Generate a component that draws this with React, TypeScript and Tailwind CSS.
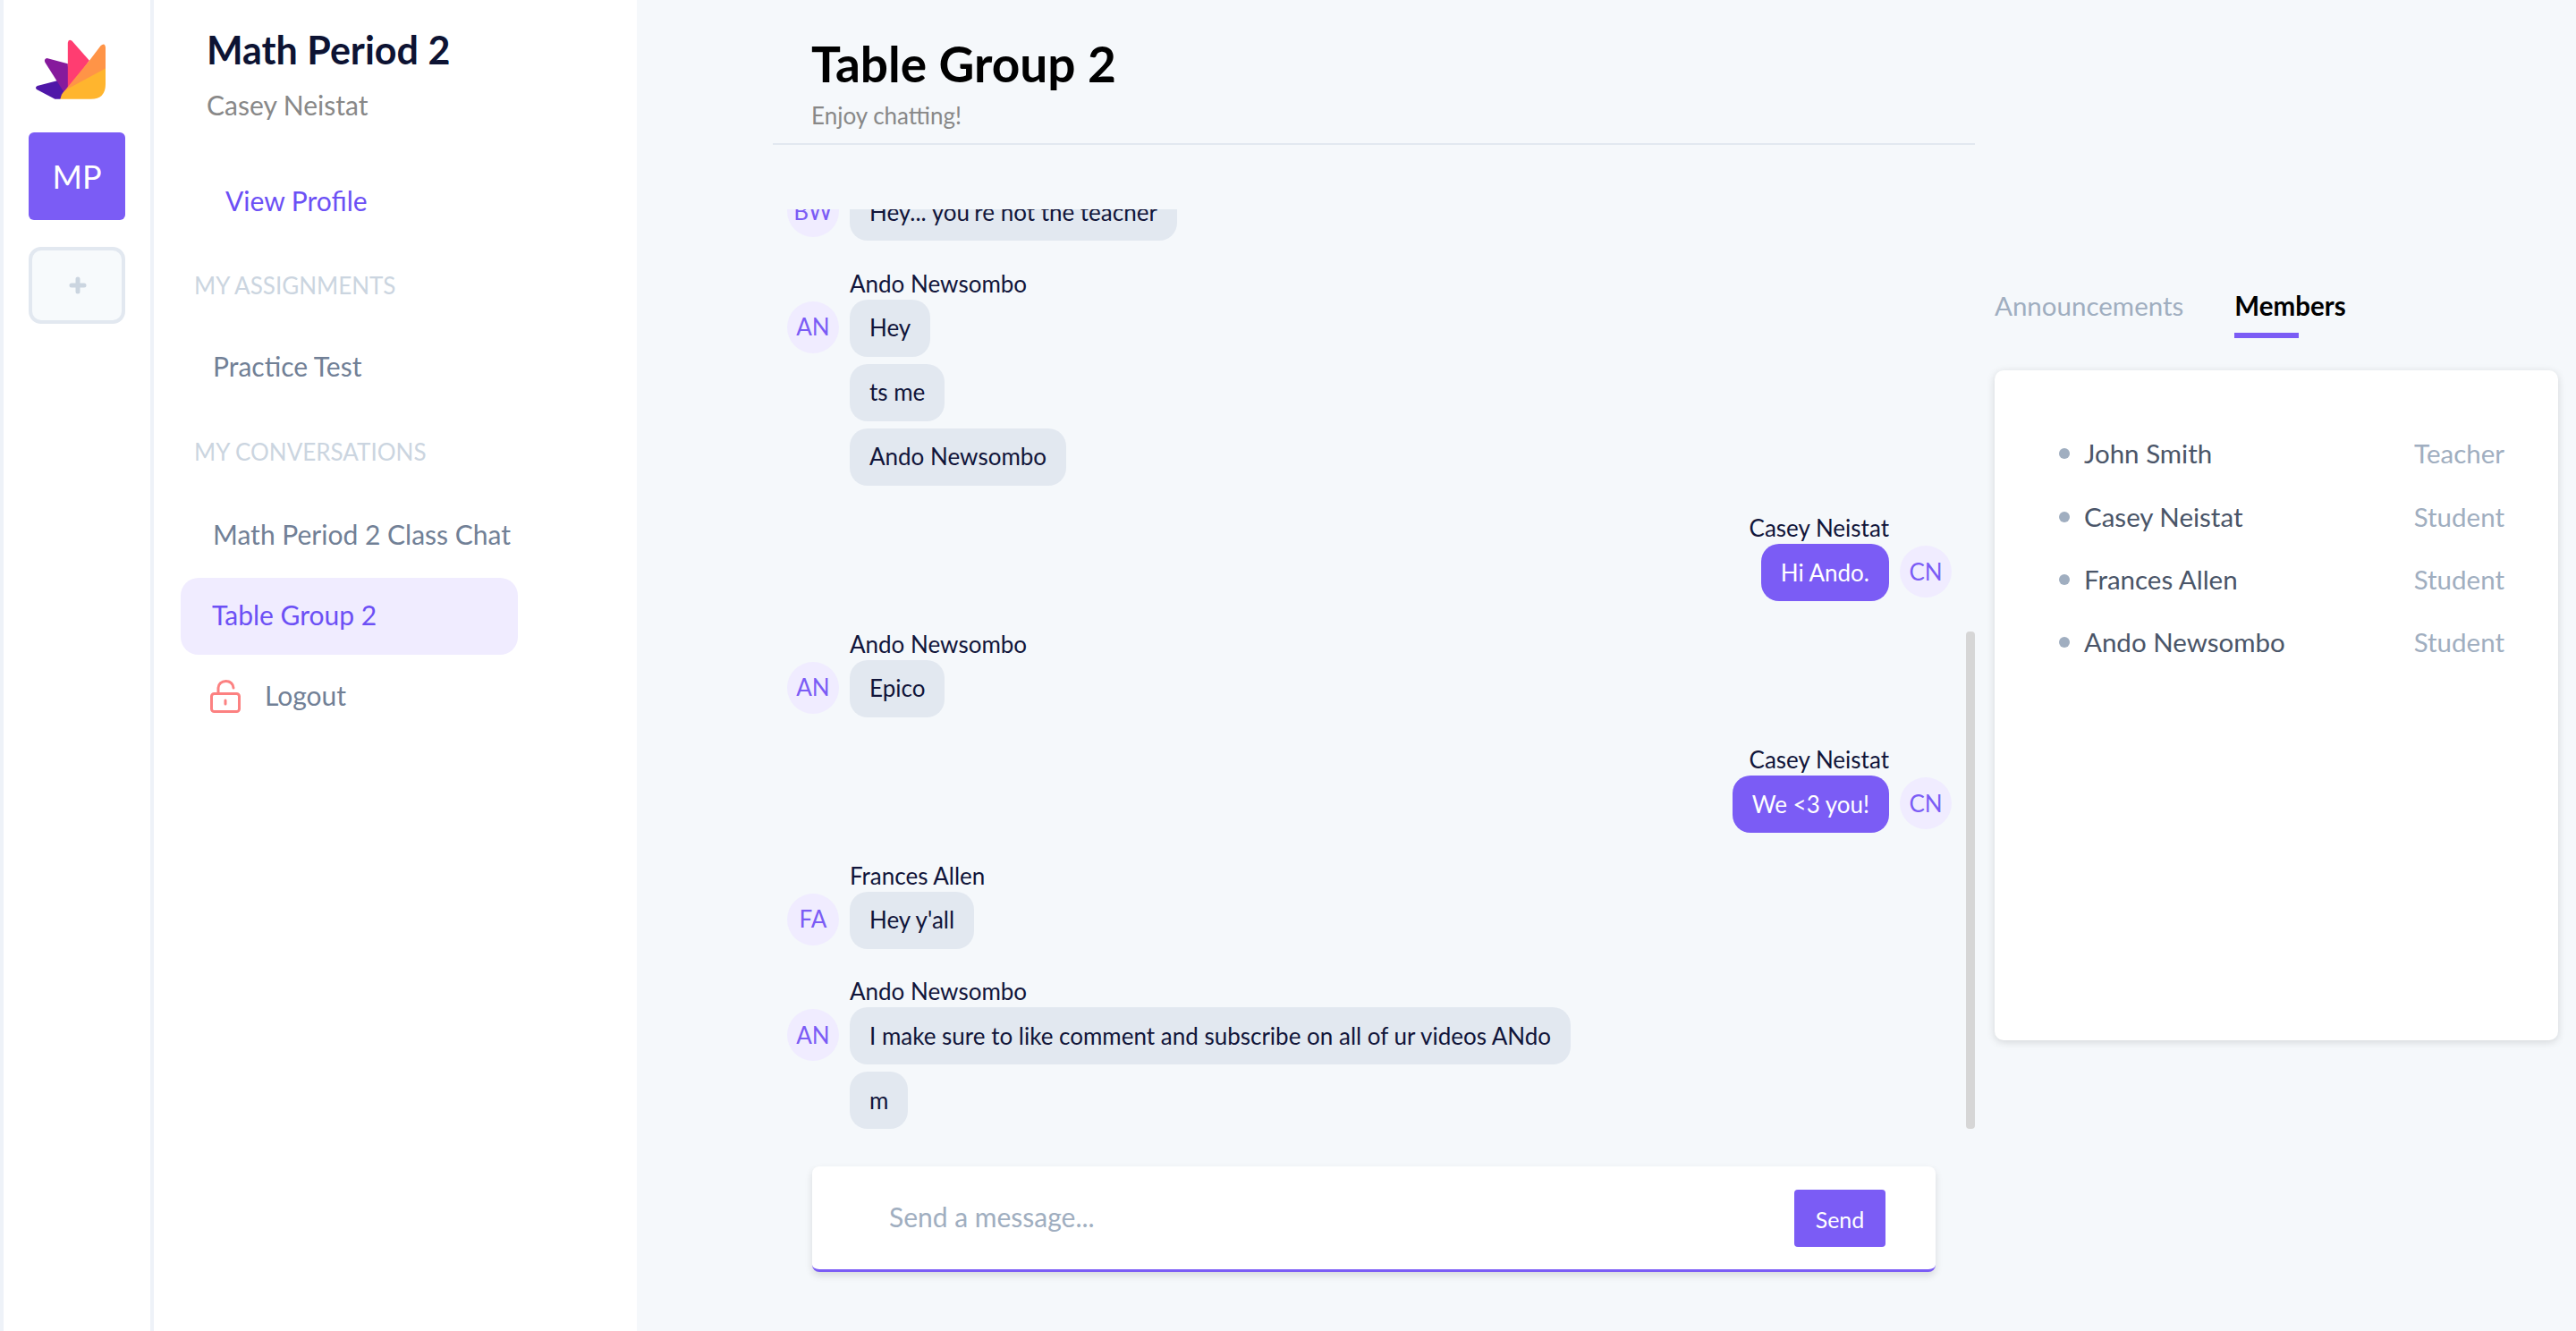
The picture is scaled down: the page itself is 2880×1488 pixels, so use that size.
import React from "react";

type Msg = { name: string; initials: string; lines: string[]; mine?: boolean };

const messages: Msg[] = [
  { name: "Brian Wang", initials: "BW", lines: ["Hey... you're not the teacher"] },
  { name: "Ando Newsombo", initials: "AN", lines: ["Hey", "ts me", "Ando Newsombo"] },
  { name: "Casey Neistat", initials: "CN", lines: ["Hi Ando."], mine: true },
  { name: "Ando Newsombo", initials: "AN", lines: ["Epico"] },
  { name: "Casey Neistat", initials: "CN", lines: ["We <3 you!"], mine: true },
  { name: "Frances Allen", initials: "FA", lines: ["Hey y'all"] },
  { name: "Ando Newsombo", initials: "AN", lines: ["I make sure to like comment and subscribe on all of ur videos ANdo", "m"] },
];

const members = [
  { name: "John Smith", role: "Teacher" },
  { name: "Casey Neistat", role: "Student" },
  { name: "Frances Allen", role: "Student" },
  { name: "Ando Newsombo", role: "Student" },
];

function Logo() {
  return (
    <svg viewBox="115 68 245 206" width="82" height="69" className="block">
      <path d="M126 226 L195 208 L228 240 L203 270 L185 270 L124 238 Q117 231 126 226 Z" fill="#4f17a8" />
      <path d="M158 134 L228 152 L232 240 L214 246 L152 148 Q147 137 158 134 Z" fill="#861a9c" />
      <path d="M228 82 Q230 68 242 76 L300 142 L228 240 Z" fill="#ff3d71" />
      <path d="M300 142 L338 92 Q352 80 354 98 L354 170 L205 258 Z" fill="#ff9447" />
      <path d="M354 168 L354 220 Q354 270 305 270 L203 270 Q205 250 228 236 Z" fill="#ffb52e" />
    </svg>
  );
}

function LockIcon() {
  return (
    <svg width="34" height="37" viewBox="0 0 34 37" fill="none" stroke="#fc8181" strokeWidth="3" strokeLinecap="round" className="shrink-0">
      <rect x="1.5" y="15.5" width="31" height="20" rx="3" />
      <path d="M9 15 V9 a8.5 7.5 0 0 1 17 0" />
      <path d="M17 23 V27" />
    </svg>
  );
}

function Message({ msg }: { msg: Msg }) {
  const avatar = (
    <div className="mt-[34px] flex h-[58px] w-[58px] shrink-0 items-center justify-center rounded-full bg-[#f0ecff] text-[26px] text-[#7b5cf5]">
      {msg.initials}
    </div>
  );
  return (
    <div className={`flex gap-3 ${msg.mine ? "justify-end" : "justify-start"}`}>
      {!msg.mine && avatar}
      <div className={`flex flex-col gap-2 ${msg.mine ? "items-end" : "items-start"}`}>
        <div className="-mb-2 pb-[4px] text-[26px] leading-[28px] text-[#11153a]">{msg.name}</div>
        {msg.lines.map((line, i) => (
          <div
            key={i}
            className={`flex h-[64px] items-center rounded-[20px] px-[22px] text-[26px] ${
              msg.mine ? "bg-[#7b5cf5] text-white" : "bg-[#e2e8f0] text-[#11153a]"
            }`}
          >
            {line}
          </div>
        ))}
      </div>
      {msg.mine && avatar}
    </div>
  );
}

export default function App() {
  return (
    <div className="flex h-screen w-full overflow-hidden bg-[#f5f8fb] font-['Lato',sans-serif]">
      {/* class switcher */}
      <nav className="flex w-[172px] shrink-0 flex-col border-r-[4px] border-l-[4px] border-[#eef2f8] bg-white pl-[28px] pt-[43px]">
        <div className="ml-[6px]">
          <Logo />
        </div>
        <div className="mt-[36px] flex h-[98px] w-[108px] items-center justify-center rounded-[6px] bg-[#7b5cf5] text-[36px] text-white">
          MP
        </div>
        <div className="mt-[30px] flex h-[86px] w-[108px] items-center justify-center rounded-[14px] border-[4px] border-[#e2e8f0] bg-[#f7fafc] pl-[2px]">
          <svg width="20" height="20" viewBox="0 0 20 20" stroke="#cbd5e0" strokeWidth="5" strokeLinecap="round">
            <path d="M10 3 V17 M3 10 H17" />
          </svg>
        </div>
      </nav>

      {/* class menu */}
      <aside className="flex w-[540px] shrink-0 flex-col bg-white">
        <div className="pl-[59px] pt-[33px]">
          <h2 className="text-[43px] font-bold leading-[46px] text-[#0d1333]">Math Period 2</h2>
          <p className="mt-[20px] text-[30px] leading-[36px] text-[#888888]">Casey Neistat</p>
        </div>
        <a className="ml-[30px] mt-[46px] flex h-[86px] items-center pl-[50px] text-[30px] text-[#6c50f5]">View Profile</a>
        <div className="ml-[45px] mt-[36px] text-[26px] leading-[32px] text-[#cbd5e0]">MY ASSIGNMENTS</div>
        <a className="ml-[30px] mt-[31px] flex h-[86px] items-center pl-[36px] text-[30px] text-[#718096]">Practice Test</a>
        <div className="ml-[45px] mt-[37px] text-[26px] leading-[32px] text-[#cbd5e0]">MY CONVERSATIONS</div>
        <div className="ml-[30px] mt-[35px] flex w-[377px] flex-col gap-1">
          <a className="flex h-[86px] items-center pb-[4px] pl-[36px] text-[30px] text-[#718096]">Math Period 2 Class Chat</a>
          <a className="flex h-[86px] items-center rounded-[20px] bg-[#f0ecff] pb-[4px] pl-[35px] text-[30px] text-[#6c50f5]">Table Group 2</a>
          <a className="flex h-[86px] items-center gap-[27px] pb-[2px] pl-[33px] text-[30px] text-[#718096]">
            <LockIcon />
            <span className="pb-[2px]">Logout</span>
          </a>
        </div>
      </aside>

      {/* chat */}
      <main className="ml-[152px] flex w-[1344px] shrink-0 flex-col">
        <header className="h-[162px] border-b-2 border-[#e2e8f0] pl-[43px] pt-[39px]">
          <h1 className="text-[55px] font-bold leading-[64px] text-black">Table Group 2</h1>
          <p className="mt-[8px] text-[26px] leading-[36px] text-[#888888]">Enjoy chatting!</p>
        </header>
        <div className="relative mt-[72px] h-[1028px]">
          <div className="flex h-full flex-col justify-end gap-[33.5px] overflow-hidden pl-[16px] pr-[26px]">
            {messages.map((m, i) => (
              <div key={i} className="shrink-0">
                <Message msg={m} />
              </div>
            ))}
          </div>
          <div className="absolute bottom-0 right-0 h-[556px] w-[10px] rounded-[4px] bg-[#d6d6d6]" />
        </div>
        <div className="mx-[44px] mt-[42px] flex h-[118px] items-center justify-between rounded-[8px] border-b-[3px] border-[#7b5cf5] bg-white pl-[86px] pr-[56px] shadow-[0_4px_8px_rgba(0,0,0,0.12)]">
          <span className="pb-[2px] text-[30px] text-[#a0aec0]">Send a message...</span>
          <button className="flex h-[64px] w-[102px] items-center justify-center rounded-[4px] bg-[#7b5cf5] pt-1 text-[25px] text-white">
            Send
          </button>
        </div>
      </main>

      {/* side panel */}
      <section className="ml-[22px] flex w-[630px] shrink-0 flex-col pt-[324px]">
        <div className="flex gap-[57px]">
          <div className="h-[36px] text-[29.5px] leading-[36px] text-[#a0aec0]">Announcements</div>
          <div className="flex flex-col">
            <div className="text-[29.5px] font-bold leading-[36px] text-black">Members</div>
            <div className="mt-[12px] h-[6px] w-[72px] bg-[#7b5cf5]" />
          </div>
        </div>
        <div className="mt-[36px] h-[749px] rounded-[10px] bg-white pl-[72px] pr-[60px] pt-[57px] shadow-[0_2px_10px_rgba(0,0,0,0.14)]">
          {members.map((m) => (
            <div key={m.name} className="flex h-[70px] items-center text-[29.5px] first:h-[72px]">
              <span className="mr-[16px] h-[12px] w-[12px] rounded-full bg-[#a0aec0]" />
              <span className="text-[#4a5568]">{m.name}</span>
              <span className="ml-auto text-[#a0aec0]">{m.role}</span>
            </div>
          ))}
        </div>
      </section>
    </div>
  );
}
